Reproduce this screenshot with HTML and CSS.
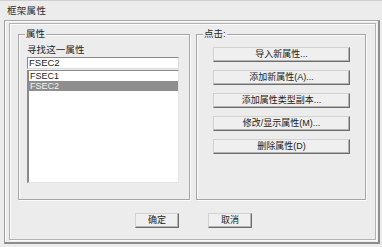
FILE: index.html
```html
<!DOCTYPE html>
<html lang="zh-CN">
<head>
<meta charset="utf-8">
<title>框架属性</title>
<link rel="stylesheet" href="styles.css">
</head>
<body>
<div class="window">
  <div class="titlebar">框架属性</div>
  <div class="outer">
    <div class="inner">
      <div class="groups">
        <div class="group group-left">
          <span class="legend">属性</span>
          <div class="find-label">寻找这一属性</div>
          <div class="textbox">FSEC2</div>
          <div class="listbox">
            <div class="item">FSEC1</div>
            <div class="item selected">FSEC2</div>
          </div>
        </div>
        <div class="group group-right">
          <span class="legend">点击:</span>
          <div class="btn-col">
            <div class="btn wide">导入新属性...</div>
            <div class="btn wide">添加新属性(A)...</div>
            <div class="btn wide">添加属性类型副本...</div>
            <div class="btn wide">修改/显示属性(M)...</div>
            <div class="btn wide">删除属性(D)</div>
          </div>
        </div>
      </div>
      <div class="footer">
        <div class="btn small">确定</div>
        <div class="btn small">取消</div>
      </div>
    </div>
  </div>
</div>
</body>
</html>
```
FILE: styles.css
```css
* { box-sizing: border-box; }
html, body {
  margin: 0;
  padding: 0;
  background: #ececec;
}
body {
  font-family: "Liberation Sans", "Noto Sans CJK SC", sans-serif;
  font-size: 9px;
  color: #1e1e1e;
}
.window {
  width: 382px;
  height: 247px;
  background: #ececec;
  border-top: 1px solid #d0d0d0;
  display: flex;
  flex-direction: column;
}
.titlebar {
  height: 19px;
  line-height: 19px;
  padding-left: 7px;
  font-size: 9.5px;
  letter-spacing: 0.3px;
  color: #2a2a2a;
}
.outer {
  margin: 0 2px 0 4px;
  height: 224px;
  border-top: 1px solid #a8a8a8;
  border-left: 1px solid #a0a0a0;
  border-right: 2px solid #8c8c8c;
  border-bottom: 2px solid #8c8c8c;
  box-shadow: inset 1px 1px 0 #fafafa;
  padding: 2px 2px 2px 4px;
}
.inner {
  height: 100%;
  border: 1px solid #b2b2b2;
  box-shadow: inset 1px 1px 0 #fafafa, 1px 1px 0 #fafafa;
  padding: 10px 8px 0 8px;
  display: flex;
  flex-direction: column;
}
.groups {
  display: flex;
  gap: 6px;
  height: 166px;
}
.group {
  position: relative;
  border: 1px solid #a6a6a6;
  box-shadow: inset 1px 1px 0 #fbfbfb, 1px 1px 0 #fbfbfb;
  height: 166px;
}
.group-left {
  width: 172px;
  padding: 9px 0 0 8px;
}
.group-right {
  width: 170px;
  padding: 12px 0 0 16px;
}
.legend {
  position: absolute;
  top: -7px;
  left: 6px;
  padding: 0 1px;
  background: #ececec;
  line-height: 12px;
  font-size: 9.5px;
  color: #1e1e1e;
}
.find-label {
  height: 13px;
  line-height: 11px;
  font-size: 9.5px;
  letter-spacing: 0.1px;
}
.textbox {
  width: 152px;
  height: 12px;
  background: #fff;
  border-top: 1px solid #8a8a8a;
  border-left: 1px solid #8a8a8a;
  border-right: 1px solid #dcdcdc;
  border-bottom: 1px solid #dcdcdc;
  line-height: 10px;
  font-size: 9.5px;
  padding-left: 1px;
}
.listbox {
  margin-top: 1px;
  width: 152px;
  height: 113px;
  background: #fff;
  border-top: 1px solid #8a8a8a;
  border-left: 2px solid #8a8a8a;
  border-right: 1px solid #e4e4e4;
  border-bottom: 1px solid #e4e4e4;
  font-size: 9px;
}
.item {
  height: 10px;
  line-height: 10px;
  padding-left: 1px;
}
.item.selected {
  background: #8e8e8e;
  color: #f4f4f4;
}
.btn-col {
  display: flex;
  flex-direction: column;
  gap: 8px;
}
.btn {
  background: #efefef;
  border-top: 1px solid #d2d2d2;
  border-left: 1px solid #d2d2d2;
  border-right: 1px solid #6c6c6c;
  border-bottom: 1px solid #6c6c6c;
  box-shadow: inset -1px -1px 0 #b4b4b4;
  text-align: center;
  color: #222;
}
.btn.wide {
  width: 137px;
  height: 15px;
  line-height: 13px;
}
.footer {
  display: flex;
  gap: 29px;
  margin-top: 13px;
  padding-left: 117px;
}
.btn.small {
  width: 44px;
  height: 15px;
  line-height: 13px;
}
```
